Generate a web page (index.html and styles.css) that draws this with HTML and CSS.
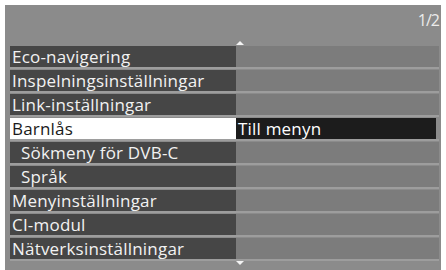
FILE: index.html
```html
<!DOCTYPE html>
<html>
<head>
<meta charset="utf-8">
<link rel="stylesheet" href="styles.css">
</head>
<body>
<div class="panel">
  <div class="header">
    <span class="page">1/2</span>
    <span class="arrow up"></span>
  </div>
  <div class="rows">
    <div class="row"><div class="label">Eco-navigering</div><div class="value"></div></div>
    <div class="row"><div class="label">Inspelningsinställningar</div><div class="value"></div></div>
    <div class="row"><div class="label">Link-inställningar</div><div class="value"></div></div>
    <div class="row selected"><div class="label">Barnlås</div><div class="value">Till menyn</div></div>
    <div class="row"><div class="label indent">Sökmeny för DVB-C</div><div class="value"></div></div>
    <div class="row"><div class="label indent">Språk</div><div class="value"></div></div>
    <div class="row"><div class="label">Menyinställningar</div><div class="value"></div></div>
    <div class="row"><div class="label">CI-modul</div><div class="value"></div></div>
    <div class="row"><div class="label">Nätverksinställningar</div><div class="value"></div></div>
  </div>
  <div class="footer"><span class="arrow down"></span></div>
</div>
</body>
</html>
```
FILE: styles.css
```css
html, body {
  margin: 0;
  padding: 0;
  background: #ffffff;
}
body {
  width: 446px;
  height: 270px;
  overflow: hidden;
  font-family: "Open Sans", "Noto Sans", sans-serif;
}
.panel {
  margin: 5px 0 0 5px;
  width: 436px;
  height: 265px;
  background: #8b8b8b;
  box-sizing: border-box;
  padding: 0 2px 0 5px;
  display: flex;
  flex-direction: column;
}
.header {
  height: 41px;
  position: relative;
  flex: none;
}
.page {
  position: absolute;
  right: 0;
  top: 4px;
  color: #ececec;
  font-size: 16px;
  letter-spacing: -1px;
}
.arrow {
  position: absolute;
  left: 226px;
  width: 0;
  height: 0;
  border-left: 4px solid transparent;
  border-right: 4px solid transparent;
}
.arrow.up {
  bottom: 1px;
  border-bottom: 4px solid #f4f4f4;
}
.rows {
  display: flex;
  flex-direction: column;
  gap: 3px;
  flex: none;
}
.row {
  display: flex;
  height: 21px;
  box-shadow: 0 2px 0 #9d9d9d;
}
.label {
  width: 226px;
  background: #464646;
  color: #f2f2f2;
  font-size: 17px;
  line-height: 22px;
  height: 21px;
  padding-left: 2px;
  box-sizing: border-box;
  white-space: nowrap;
  letter-spacing: 0.2px;
}
.label.indent {
  padding-left: 11px;
}
.value {
  flex: 1;
  background: #7c7c7c;
  color: #ffffff;
  font-size: 17px;
  line-height: 22px;
  height: 21px;
  padding-left: 2px;
  letter-spacing: 0.2px;
  white-space: nowrap;
}
.selected .label {
  background: #ffffff;
  color: #1a1a1a;
}
.selected .value {
  background: #1c1c1c;
  margin-right: 3px;
}
.footer {
  position: relative;
  flex: 1;
}
.arrow.down {
  top: 2px;
  border-top: 4px solid #f4f4f4;
}
```
